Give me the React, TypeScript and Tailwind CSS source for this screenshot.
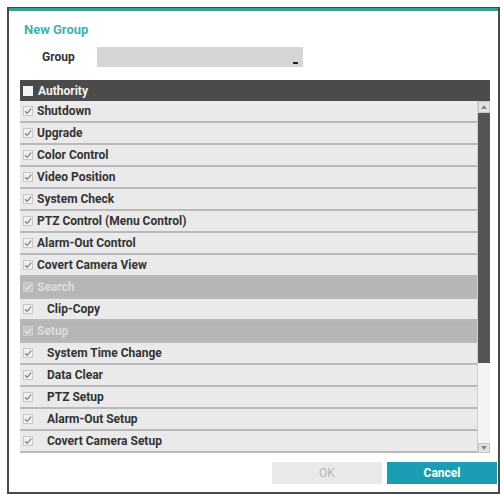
import React from "react";

type Row = { label: string; kind: "item" | "section" | "child" };

const rows: Row[] = [
  { label: "Shutdown", kind: "item" },
  { label: "Upgrade", kind: "item" },
  { label: "Color Control", kind: "item" },
  { label: "Video Position", kind: "item" },
  { label: "System Check", kind: "item" },
  { label: "PTZ Control (Menu Control)", kind: "item" },
  { label: "Alarm-Out Control", kind: "item" },
  { label: "Covert Camera View", kind: "item" },
  { label: "Search", kind: "section" },
  { label: "Clip-Copy", kind: "child" },
  { label: "Setup", kind: "section" },
  { label: "System Time Change", kind: "child" },
  { label: "Data Clear", kind: "child" },
  { label: "PTZ Setup", kind: "child" },
  { label: "Alarm-Out Setup", kind: "child" },
  { label: "Covert Camera Setup", kind: "child" },
];

function Check({ light }: { light?: boolean }) {
  return (
    <svg width="10" height="10" viewBox="0 0 10 10" className="shrink-0">
      <rect
        x="0.5"
        y="0.5"
        width="9"
        height="9"
        fill={light ? "#c4c4c4" : "#f2f2f2"}
        stroke={light ? "#d0d0d0" : "#c8c8c8"}
      />
      <path
        d="M2 5.2 L4.2 7.4 L8.2 2.6"
        fill="none"
        stroke={light ? "#e6e6e6" : "#808080"}
        strokeWidth="1.3"
      />
    </svg>
  );
}

export default function App() {
  return (
    <div
      className="w-[503px] h-[495px] bg-white p-[7px] pr-[3px] pb-[1px]"
      style={{ fontFamily: "Roboto, 'Liberation Sans', sans-serif" }}
    >
      <div className="h-full flex flex-col border-x-2 border-b-2 border-[#4a4a4a] border-t border-t-[#2f4f4f]">
        <div className="h-[3px] bg-[#35a39b]" />
        <div className="flex-1 flex flex-col pl-[11px] pr-[1px]">
          <div className="pt-[10px] pl-[4px] h-[28px] text-[13px] leading-[18px] font-bold text-[#3db3b0]">
            New Group
          </div>
          <div className="flex items-center h-[20px] mt-[8px]">
            <span className="w-[77px] pl-[22px] text-[12px] font-bold text-[#333]">Group</span>
            <div className="relative w-[206px] h-[20px] bg-[#d6d6d6]">
              <div className="absolute right-[5px] bottom-[3px] w-[5px] h-[2px] bg-[#222]" />
            </div>
          </div>
          <div className="mt-[13px] w-[470px] h-[21px] bg-[#4b4b4b] flex items-center gap-[5px] pl-[3px]">
            <div className="w-[10px] h-[10px] bg-[#f4f4f4]" />
            <span className="text-[12px] font-bold text-[#f2f2f2]">Authority</span>
          </div>
          <div className="flex w-[470px]">
            <div className="w-[457px]">
              {rows.map((r) => {
                const section = r.kind === "section";
                return (
                  <div
                    key={r.label}
                    className={`h-[22px] flex items-center pl-[3px] border-b-2 border-[#b9b9b9] ${
                      section ? "bg-[#b6b6b6]" : "bg-[#eaeaea]"
                    }`}
                  >
                    <Check light={section} />
                    <span
                      className={`text-[12px] font-bold ${
                        r.kind === "child" ? "ml-[14px]" : "ml-[4px]"
                      } ${section ? "text-[#dcdcdc]" : "text-[#333]"}`}
                    >
                      {r.label}
                    </span>
                  </div>
                );
              })}
            </div>
            <div className="w-[13px] flex flex-col bg-[#f4f4f4] border-l border-[#cfcfcf]">
              <div className="h-[12px] flex items-center justify-center bg-[#e2e2e2] border border-[#c8c8c8]">
                <svg width="6" height="4" viewBox="0 0 6 4">
                  <path d="M0 4 L3 0 L6 4 Z" fill="#888" />
                </svg>
              </div>
              <div className="h-[250px] bg-[#555]" />
              <div className="flex-1" />
              <div className="h-[10px] flex items-center justify-center bg-[#e2e2e2] border border-[#c8c8c8]">
                <svg width="6" height="4" viewBox="0 0 6 4">
                  <path d="M0 0 L6 0 L3 4 Z" fill="#888" />
                </svg>
              </div>
            </div>
          </div>
          <div className="flex justify-end gap-[5px] mt-[9px]">
            <div className="w-[110px] h-[22px] bg-[#e9e9e9] flex items-center justify-center text-[12px] text-[#b5b5b5]">
              OK
            </div>
            <div className="w-[110px] h-[22px] bg-[#1b9db3] flex items-center justify-center text-[12px] font-bold text-white">
              Cancel
            </div>
          </div>
        </div>
      </div>
    </div>
  );
}
